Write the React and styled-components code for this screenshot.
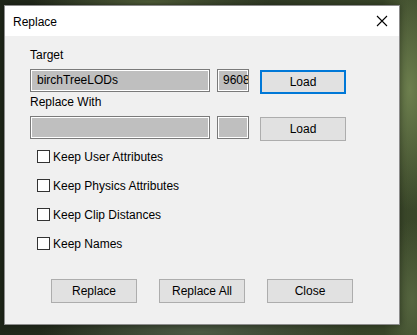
import styled, { createGlobalStyle } from "styled-components";

const GlobalStyle = createGlobalStyle`
  html, body {
    margin: 0;
    padding: 0;
  }
  body {
    width: 417px;
    height: 335px;
    overflow: hidden;
    font-family: "Liberation Sans", Arial, sans-serif;
    background:
      radial-gradient(ellipse 40px 120px at 410px 90px, #6d7f4e 0%, rgba(109, 127, 78, 0) 100%),
      radial-gradient(ellipse 30px 80px at 412px 300px, #55653f 0%, rgba(85, 101, 63, 0) 100%),
      radial-gradient(ellipse 160px 20px at 200px 332px, #4c5a44 0%, rgba(76, 90, 68, 0) 100%),
      radial-gradient(ellipse 120px 10px at 150px 2px, #4f5c38 0%, rgba(79, 92, 56, 0) 100%),
      linear-gradient(90deg, #1f2619 0%, #2c3522 50%, #3a4729 100%);
  }
`;

const Page = styled.div`
  padding: 5px 0 0 4px;
`;

const Window = styled.div`
  width: 394px;
  height: 318px;
  border: 1px solid #8c8c8c;
  background: #f0f0f0;
  display: flex;
  flex-direction: column;
  box-shadow: 0 0 6px rgba(0, 0, 0, 0.35);
`;

const TitleBar = styled.div`
  height: 30px;
  background: #ffffff;
  display: flex;
  align-items: center;
  justify-content: space-between;
  padding: 0 10px 0 8px;
`;

const Title = styled.span`
  font-size: 12px;
  color: #000;
  margin-top: 1px;
`;

const CloseIcon = styled.svg`
  width: 12px;
  height: 12px;
  margin-right: 1px;
`;

const Body = styled.div`
  padding: 11px 0 0 25px;
  display: flex;
  flex-direction: column;
`;

const Label = styled.div`
  font-size: 12px;
  line-height: 16px;
  color: #000;
`;

const FieldRow = styled.div`
  display: flex;
  align-items: flex-start;
  margin-top: 6px;
`;

const Field = styled.div`
  width: ${(p) => p.$width}px;
  height: 23px;
  box-sizing: border-box;
  border: 1px solid #7a7a7a;
  box-shadow: inset 0 0 0 1px #ffffff;
  background: #bfbfbf;
  margin-right: ${(p) => p.$gap}px;
  padding: 0 0 0 ${(p) => p.$pad}px;
  font-size: 12px;
  line-height: 21px;
  color: #000;
  overflow: hidden;
  white-space: nowrap;
  flex-shrink: 0;
`;

const Button = styled.button`
  width: 86px;
  height: 24px;
  box-sizing: border-box;
  margin: ${(p) => p.$top || 0}px 0 0;
  padding: 0;
  background: #e1e1e1;
  border: ${(p) => (p.$primary ? "2px solid #0078d7" : "1px solid #adadad")};
  font-family: "Liberation Sans", Arial, sans-serif;
  font-size: 12px;
  color: #000;
  flex-shrink: 0;
`;

const Options = styled.div`
  display: flex;
  flex-direction: column;
  gap: 16px;
  margin: 9px 0 0 7px;
`;

const Option = styled.label`
  display: flex;
  align-items: center;
  gap: 3px;
  height: 13px;
  font-size: 12px;
  color: #000;
`;

const Box = styled.span`
  width: 13px;
  height: 13px;
  box-sizing: border-box;
  border: 1px solid #333333;
  background: #ffffff;
  flex-shrink: 0;
`;

const Actions = styled.div`
  display: flex;
  justify-content: center;
  gap: 22px;
  margin: 29px 25px 0 0;
`;

const options = [
  "Keep User Attributes",
  "Keep Physics Attributes",
  "Keep Clip Distances",
  "Keep Names",
];

const App = () => {
  return (
    <Page>
      <GlobalStyle />
      <Window>
        <TitleBar>
          <Title>Replace</Title>
          <CloseIcon viewBox="0 0 12 12">
            <path d="M1 1 L11 11 M11 1 L1 11" stroke="#000" strokeWidth="1.1" fill="none" />
          </CloseIcon>
        </TitleBar>
        <Body>
          <Label>Target</Label>
          <FieldRow>
            <Field $width={180} $gap={7} $pad={6}>birchTreeLODs</Field>
            <Field $width={32} $gap={11} $pad={5}>9608</Field>
            <Button $primary $top={1}>Load</Button>
          </FieldRow>
          <Label>Replace With</Label>
          <FieldRow>
            <Field $width={180} $gap={7} $pad={6} />
            <Field $width={32} $gap={11} $pad={5} />
            <Button $top={1}>Load</Button>
          </FieldRow>
          <Options>
            {options.map((text) => (
              <Option key={text}>
                <Box />
                {text}
              </Option>
            ))}
          </Options>
          <Actions>
            <Button>Replace</Button>
            <Button>Replace All</Button>
            <Button>Close</Button>
          </Actions>
        </Body>
      </Window>
    </Page>
  );
};

export default App;
